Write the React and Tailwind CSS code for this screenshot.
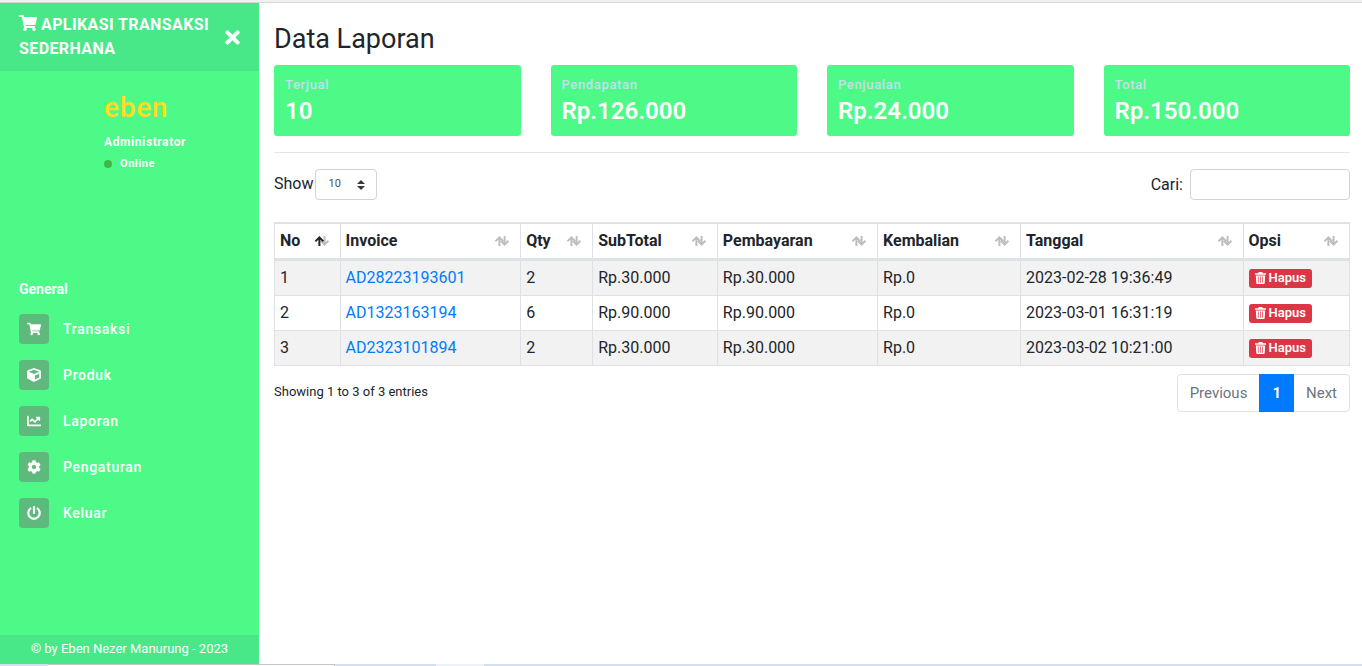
import { FaShoppingCart, FaTimes, FaCube, FaChartLine, FaCog, FaPowerOff } from "react-icons/fa";

const menu = [
  ["Transaksi", FaShoppingCart],
  ["Produk", FaCube],
  ["Laporan", FaChartLine],
  ["Pengaturan", FaCog],
  ["Keluar", FaPowerOff],
];

const stats = [
  ["Terjual", "10"],
  ["Pendapatan", "Rp.126.000"],
  ["Penjualan", "Rp.24.000"],
  ["Total", "Rp.150.000"],
];

const columns = [
  ["No", "w-[6.1%]"],
  ["Invoice", "w-[16.8%]"],
  ["Qty", "w-[6.7%]"],
  ["SubTotal", "w-[11.6%]"],
  ["Pembayaran", "w-[14.9%]"],
  ["Kembalian", "w-[13.3%]"],
  ["Tanggal", "w-[20.7%]"],
  ["Opsi", "w-[9.9%]"],
];

const rows = [
  ["1", "AD28223193601", "2", "Rp.30.000", "Rp.30.000", "Rp.0", "2023-02-28 19:36:49"],
  ["2", "AD1323163194", "6", "Rp.90.000", "Rp.90.000", "Rp.0", "2023-03-01 16:31:19"],
  ["3", "AD2323101894", "2", "Rp.30.000", "Rp.30.000", "Rp.0", "2023-03-02 10:21:00"],
];

function SortIcon({ active }) {
  return (
    <svg className="h-[10px] w-4 shrink-0" viewBox="0 0 16 10" fill="none" strokeWidth="2">
      <path d="M10.6 0v8.4M6.8 4.8l3.8 3.8 3.8-3.8" stroke="#bdbebf" />
      <path d="M5.4 10V1.6M1.4 5.4l4-4 4 4" stroke={active ? "#212529" : "#bdbebf"} />
    </svg>
  );
}

function TrashIcon() {
  return (
    <svg className="h-3 w-[11px]" viewBox="0 0 11 12">
      <path
        fill="currentColor"
        fillRule="evenodd"
        d="M0 1.2h3.2L3.8 0h3.4l.6 1.2H11v1.5H0zM.8 3.4h9.4l-.5 7.6a1 1 0 0 1-1 1H2.3a1 1 0 0 1-1-1zM2.9 4.6v6.1h.7V4.6zm2.2 0v6.1h.7V4.6zm2.2 0v6.1h.7V4.6z"
      />
    </svg>
  );
}

function Sidebar() {
  return (
    <aside className="flex w-[259px] shrink-0 flex-col bg-[#4dfa87] text-white">
      <div className="flex items-center justify-between bg-[#48e888] py-[10px] pr-4 pl-[19px]">
        <h1 className="text-base leading-6 font-bold tracking-wide">
          <FaShoppingCart className="mr-1 inline h-4 w-[18px] align-[-1px]" />
          APLIKASI TRANSAKSI SEDERHANA
        </h1>
        <button type="button" aria-label="Tutup menu" className="shrink-0">
          <FaTimes className="size-[21px]" />
        </button>
      </div>
      <div className="pt-4 pl-[104px]">
        <p className="text-[28px] leading-[42px] font-medium tracking-wide text-[#ffdd1c]">eben</p>
        <p className="mt-1 text-[12px] leading-[18px] font-bold tracking-wider">Administrator</p>
        <p className="mt-1 flex items-center gap-2 text-[11px] leading-[18px] font-bold tracking-wider">
          <span className="size-2 rounded-full bg-[#42b549]" />
          Online
        </p>
      </div>
      <nav className="mt-[106px] px-[19px]">
        <h2 className="text-sm leading-5 font-bold">General</h2>
        <ul className="mt-[15px] flex flex-col gap-4">
          {menu.map(([label, Icon]) => (
            <li key={label}>
              <a href="#" className="flex items-center gap-[14px] text-sm font-medium tracking-wider">
                <span className="flex size-[30px] items-center justify-center rounded bg-[#5eb97d]">
                  <Icon className="size-[14px]" />
                </span>
                <span className="pb-px">{label}</span>
              </a>
            </li>
          ))}
        </ul>
      </nav>
      <footer className="mt-auto bg-[#48e888] pt-[3px] pb-[5px] text-center text-[13px] leading-[21px]">
        © by Eben Nezer Manurung - 2023
      </footer>
    </aside>
  );
}

function Laporan() {
  return (
    <main className="min-w-0 flex-1 pt-[19px] pr-3 pl-[15px]">
      <h2 className="text-[27px] leading-[34px]">Data Laporan</h2>
      <div className="mt-[9px] grid grid-cols-4 gap-[30px]">
        {stats.map(([label, value]) => (
          <div key={label} className="rounded-[3px] bg-[#4dfa87] px-[11px] pt-[10px] pb-2">
            <p className="text-[13px] leading-5 font-medium tracking-wider text-[#c9dcf0]">{label}</p>
            <p className="text-2xl leading-[33px] font-semibold text-white">{value}</p>
          </div>
        ))}
      </div>
      <hr className="my-4 border-[#e5e5e5]" />
      <div className="flex items-center justify-between">
        <label className="flex items-center gap-0.5">
          <span className="pb-0.5">Show</span>
          <span className="relative">
            <select className="block h-[31px] w-[62px] appearance-none rounded border border-[#ced4da] bg-white pl-3 text-[11px] text-[#495057]">
              <option>10</option>
            </select>
            <svg className="pointer-events-none absolute top-[11px] right-3 h-[10px] w-2" viewBox="0 0 8 10">
              <path fill="#343a40" d="M4 0 0 4h8zM4 10 0 6h8z" />
            </svg>
          </span>
        </label>
        <label className="flex items-center gap-[7px]">
          Cari:
          <input type="search" className="h-[31px] w-40 rounded border border-[#ced4da] px-2 text-sm" />
        </label>
      </div>
      <table className="mt-[22px] w-full table-fixed border-collapse border border-[#dee2e6] text-left">
        <thead>
          <tr>
            {columns.map(([name, width], i) => (
              <th key={name} className={`${width} border border-t-2 border-b-3 border-[#dee2e6] px-[5px] py-[5px] leading-6 font-bold`}>
                <button type="button" className="flex w-full items-center justify-between pr-[5px]">
                  {name}
                  <SortIcon active={i === 0} />
                </button>
              </th>
            ))}
          </tr>
        </thead>
        <tbody>
          {rows.map((row) => (
            <tr key={row[0]} className="odd:bg-[#f2f2f2]">
              {row.map((cell, i) => (
                <td key={i} className="border border-[#dee2e6] px-[5px] py-[5px] leading-6">
                  {i === 1 ? <a href="#" className="text-[#007bff]">{cell}</a> : cell}
                </td>
              ))}
              <td className="border border-[#dee2e6] px-[5px]">
                <button type="button" className="flex h-[19px] items-center gap-[3px] rounded-[3px] bg-[#dc3545] px-[6px] text-[13px] font-semibold text-white">
                  <TrashIcon />
                  Hapus
                </button>
              </td>
            </tr>
          ))}
        </tbody>
      </table>
      <div className="mt-2 flex items-start justify-between">
        <p className="pt-2 text-[13px] leading-5">Showing 1 to 3 of 3 entries</p>
        <nav aria-label="Halaman" className="flex h-[38px] items-stretch rounded border border-[#dee2e6] text-[15px] text-[#6c757d]">
          <button type="button" className="px-3">Previous</button>
          <button type="button" className="-my-px bg-[#007bff] px-[13px] font-bold text-white">1</button>
          <button type="button" className="px-3">Next</button>
        </nav>
      </div>
    </main>
  );
}

export default function App() {
  return (
    <div className="flex min-h-screen flex-col bg-white font-['Roboto','Liberation_Sans',sans-serif] text-base text-[#212529]">
      <div className="h-[3px] border-b border-[#d6d6d6] bg-[#f1f1f1]" />
      <div className="flex flex-1">
        <Sidebar />
        <Laporan />
      </div>
      <div className="flex h-[2px] bg-[#d5e0ee]">
        <div className="ml-12 w-[287px] border-t border-r border-[#c4c4c4] bg-white" />
        <div className="ml-[101px] w-12 bg-[#edf2f8]" />
      </div>
    </div>
  );
}
